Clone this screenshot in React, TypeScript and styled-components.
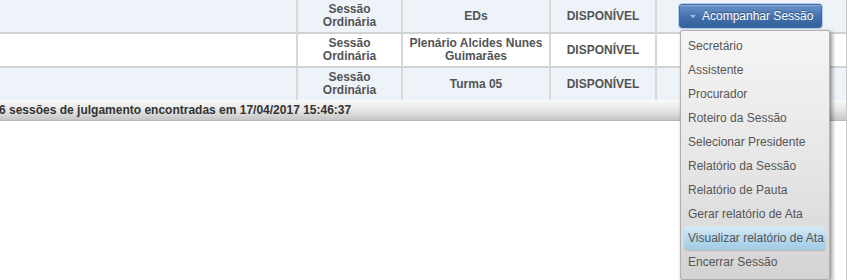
import React from "react";
import styled, { createGlobalStyle } from "styled-components";

const Global = createGlobalStyle`
  html, body { margin: 0; padding: 0; background: #fff; }
  body { font-family: "Liberation Sans", Arial, sans-serif; font-size: 12px; color: #4a4a4a; }
`;

const Page = styled.div`
  width: 846px;
  height: 280px;
  border-right: 1px solid #c9c9c9;
  overflow: hidden;
`;

const Table = styled.table`
  width: 846px;
  border-collapse: collapse;
  border-spacing: 0;
  table-layout: fixed;
`;

const Row = styled.tr<{ $alt?: boolean }>`
  background: ${(p) => (p.$alt ? "#eef3f9" : "#ffffff")};
`;

const Cell = styled.td<{ $first?: boolean; $top?: boolean }>`
  padding: 0 4px;
  height: 32px;
  text-align: center;
  vertical-align: middle;
  font-weight: bold;
  font-size: 12px;
  line-height: 13px;
  color: #545454;
  border-left: ${(p) => (p.$first ? "none" : "2px solid #d8d8d8")};
  border-top: ${(p) => (p.$top ? "2px solid #d2d2d2" : "none")};
`;

const ActionWrap = styled.div`
  position: relative;
  width: 143px;
  margin: 0 auto;
  left: -1px;
`;

const Button = styled.button`
  display: flex;
  align-items: center;
  gap: 6px;
  width: 143px;
  height: 24px;
  margin-top: -1px;
  padding: 0 0 0 10px;
  border: 1px solid #3a6aa8;
  border-radius: 3px;
  background: linear-gradient(#6a93c9, #4673af 50%, #33609b);
  box-shadow: 0 0 0 1px #b8cfeb, inset 0 1px 0 rgba(255, 255, 255, 0.25);
  color: #fff;
  font-family: "Liberation Sans", Arial, sans-serif;
  font-size: 12px;
  text-shadow: 0 -1px 0 rgba(0, 0, 0, 0.35);
  cursor: pointer;
`;

const Caret = styled.span`
  width: 0;
  height: 0;
  border-left: 3px solid transparent;
  border-right: 3px solid transparent;
  border-top: 3px solid #a9bfdc;
  margin-top: 1px;
`;

const Menu = styled.ul`
  position: absolute;
  top: 26px;
  left: 1px;
  width: 142px;
  margin: 0;
  padding: 3px 3px 5px;
  list-style: none;
  background: linear-gradient(#f5f5f5, #e4e4e4 60%, #d3d3d3);
  border: 1px solid #b0b0b0;
  border-radius: 2px;
  box-shadow: 2px 2px 4px rgba(0, 0, 0, 0.45);
  text-align: left;
  z-index: 10;
`;

const Item = styled.li<{ $active?: boolean }>`
  height: 24px;
  line-height: 24px;
  padding: 0 4px;
  font-weight: normal;
  font-size: 12px;
  color: #555;
  white-space: nowrap;
  border-radius: 3px;
  background: ${(p) => (p.$active ? "linear-gradient(#d6eaf6, #b3d6ec 60%, #a2cbe4)" : "transparent")};
  box-shadow: ${(p) => (p.$active ? "0 1px 1px rgba(0,0,0,0.15)" : "none")};
`;

const Footer = styled.div`
  height: 20px;
  line-height: 20px;
  margin-left: -1px;
  background: linear-gradient(#f9f9f9, #e6e6e6 50%, #c5c5c5);
  border-bottom: 1px solid #b8b8b8;
  font-weight: bold;
  font-size: 12px;
  color: #333;
  white-space: nowrap;
`;

const menuItems = [
  "Secretário",
  "Assistente",
  "Procurador",
  "Roteiro da Sessão",
  "Selecionar Presidente",
  "Relatório da Sessão",
  "Relatório de Pauta",
  "Gerar relatório de Ata",
  "Visualizar relatório de Ata",
  "Encerrar Sessão",
];

const rows = [
  { type: ["Sessão", "Ordinária"], org: ["EDs"], alt: true, menu: true },
  { type: ["Sessão", "Ordinária"], org: ["Plenário Alcides Nunes", "Guimarães"], alt: false, menu: false },
  { type: ["Sessão", "Ordinária"], org: ["Turma 05"], alt: true, menu: false },
];

export default function App() {
  return (
    <>
      <Global />
      <Page>
        <Table>
          <colgroup>
            <col style={{ width: 297 }} />
            <col style={{ width: 105 }} />
            <col style={{ width: 148 }} />
            <col style={{ width: 106 }} />
            <col style={{ width: 190 }} />
          </colgroup>
          <tbody>
            {rows.map((r, i) => (
              <Row key={i} $alt={r.alt}>
                <Cell $first $top={i > 0} />
                <Cell $top={i > 0}>
                  {r.type.map((t, j) => (
                    <div key={j}>{t}</div>
                  ))}
                </Cell>
                <Cell $top={i > 0}>
                  {r.org.map((t, j) => (
                    <div key={j}>{t}</div>
                  ))}
                </Cell>
                <Cell $top={i > 0}>DISPONÍVEL</Cell>
                <Cell $top={i > 0}>
                  {r.menu && (
                    <ActionWrap>
                      <Button>
                        <Caret />
                        Acompanhar Sessão
                      </Button>
                      <Menu>
                        {menuItems.map((m) => (
                          <Item key={m} $active={m === "Visualizar relatório de Ata"}>
                            {m}
                          </Item>
                        ))}
                      </Menu>
                    </ActionWrap>
                  )}
                </Cell>
              </Row>
            ))}
          </tbody>
        </Table>
        <Footer>6 sessões de julgamento encontradas em 17/04/2017 15:46:37</Footer>
      </Page>
    </>
  );
}
